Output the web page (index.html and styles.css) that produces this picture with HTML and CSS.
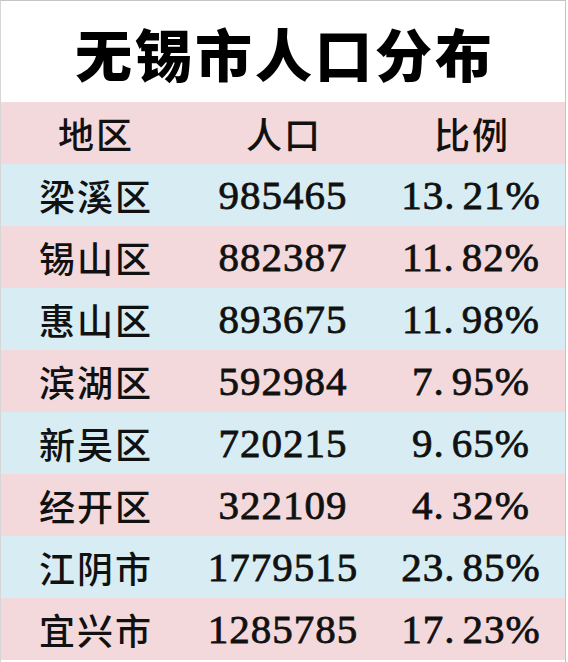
FILE: index.html
```html
<!DOCTYPE html>
<html lang="zh">
<head>
<meta charset="utf-8">
<title>无锡市人口分布</title>
<link rel="stylesheet" href="styles.css">
</head>
<body>
<div class="sheet">
  <h1 class="title">无锡市人口分布</h1>
  <div class="table">
    <div class="row pink head"><div class="cell cjk">地区</div><div class="cell cjk">人口</div><div class="cell cjk">比例</div></div>
    <div class="row blue"><div class="cell cjk">梁溪区</div><div class="cell num">985465</div><div class="cell num">13<span class="dot">.</span>21%</div></div>
    <div class="row pink"><div class="cell cjk">锡山区</div><div class="cell num">882387</div><div class="cell num">11<span class="dot">.</span>82%</div></div>
    <div class="row blue"><div class="cell cjk">惠山区</div><div class="cell num">893675</div><div class="cell num">11<span class="dot">.</span>98%</div></div>
    <div class="row pink"><div class="cell cjk">滨湖区</div><div class="cell num">592984</div><div class="cell num">7<span class="dot">.</span>95%</div></div>
    <div class="row blue"><div class="cell cjk">新吴区</div><div class="cell num">720215</div><div class="cell num">9<span class="dot">.</span>65%</div></div>
    <div class="row pink"><div class="cell cjk">经开区</div><div class="cell num">322109</div><div class="cell num">4<span class="dot">.</span>32%</div></div>
    <div class="row blue"><div class="cell cjk">江阴市</div><div class="cell num">1779515</div><div class="cell num">23<span class="dot">.</span>85%</div></div>
    <div class="row pink"><div class="cell cjk">宜兴市</div><div class="cell num">1285785</div><div class="cell num">17<span class="dot">.</span>23%</div></div>
  </div>
</div>
</body>
</html>
```
FILE: styles.css
```css
html, body {
  margin: 0;
  padding: 0;
  background: #ffffff;
}
.sheet {
  width: 566px;
  height: 662px;
  box-sizing: border-box;
  border-top: 1px solid #c4c4c4;
  border-left: 1px solid #d6d6d6;
  border-right: 1px solid #c4c4c4;
  display: flex;
  flex-direction: column;
}
.title {
  margin: 0;
  height: 101px;
  display: flex;
  align-items: center;
  justify-content: center;
  font-family: "Noto Sans CJK SC", sans-serif;
  font-weight: 900;
  font-size: 57px;
  letter-spacing: 3px;
  color: #000;
  padding-left: 4px;
  box-sizing: border-box;
}
.table {
  display: flex;
  flex-direction: column;
}
.row {
  display: grid;
  grid-template-columns: 1fr 1fr 1fr;
  height: 62px;
  align-items: center;
}
.pink { background: #f3d9db; }
.blue { background: #d7edf3; }
.cell {
  text-align: center;
  color: #111;
}
.cjk {
  font-family: "Noto Sans CJK SC", sans-serif;
  font-size: 36px;
  font-weight: 500;
  letter-spacing: 2px;
  padding-left: 2px;
}
.num {
  font-family: "Liberation Serif", serif;
  font-size: 41px;
  font-weight: normal;
  letter-spacing: 1px;
  -webkit-text-stroke: 0.8px #111;
}
.dot {
  margin-right: 7px;
}
```
